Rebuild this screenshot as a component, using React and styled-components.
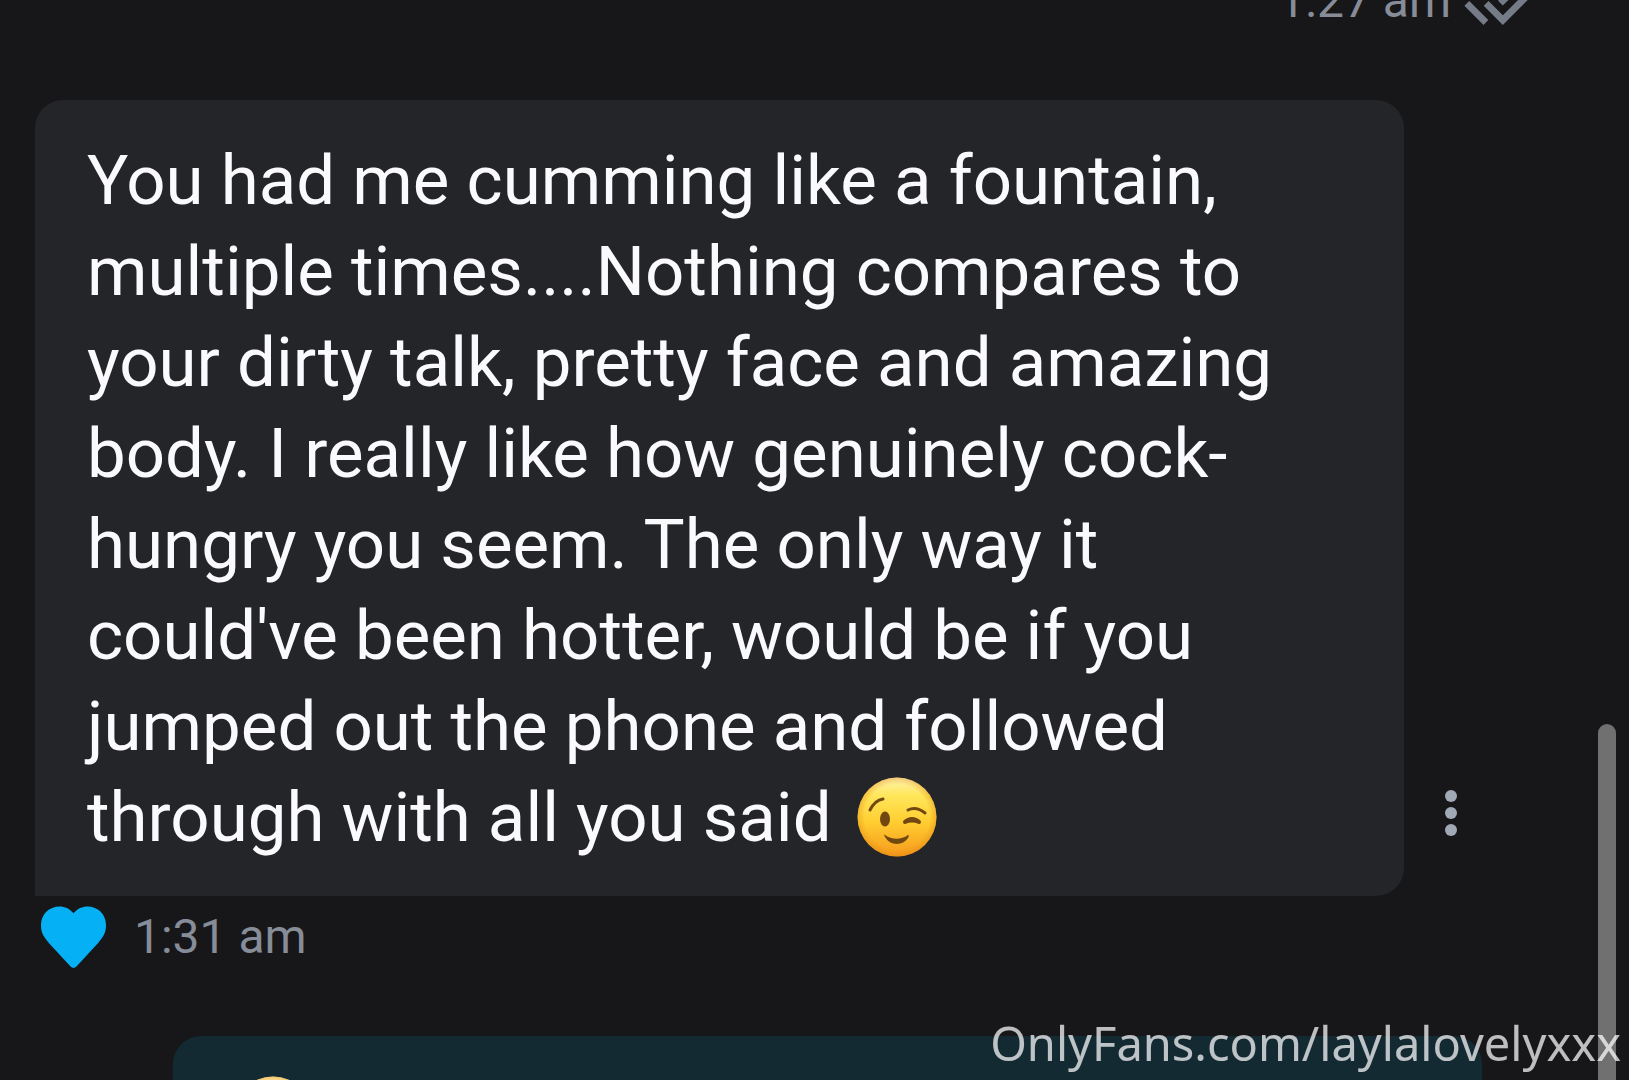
import React from 'react'
import styled, { createGlobalStyle } from 'styled-components';

const GlobalStyle = createGlobalStyle`
  * {
    box-sizing: border-box;
  }
  body {
    margin: 0;
    background-color: #171719;
    font-family: Roboto, 'Noto Sans', sans-serif;
  }
`

const Screen = styled.div`
  display: flex;
  height: 100vh;
  overflow: hidden;
  background-color: #171719;
`

const Thread = styled.main`
  display: flex;
  flex: 1;
  flex-direction: column;
  gap: 58px;
  min-width: 0;
  margin-top: -40px;
`

const Message = styled.article`
  display: flex;
  flex-direction: column;
  flex-shrink: 0;
`

const MessageRow = styled.div`
  display: flex;
  align-items: flex-end;
  padding: ${({ $own }) => ($own ? '0 116px 0 173px' : '0 123px 0 35px')};
`

const Bubble = styled.div`
  flex: 1;
  min-width: 0;
  padding: 35px 52px 33px;
  border-radius: ${({ $own }) => ($own ? '28px 28px 0 28px' : '28px 28px 28px 0')};
  background-color: ${({ $own }) => ($own ? '#132a32' : '#242529')};
`

const Text = styled.p`
  margin: 0;
  font-size: 69px;
  line-height: 91px;
  color: #fafafc;
`

const Meta = styled.footer`
  display: flex;
  align-items: center;
  justify-content: ${({ $own }) => ($own ? 'flex-end' : 'flex-start')};
  gap: ${({ $own }) => ($own ? '12px' : '28px')};
  height: 82px;
  padding: ${({ $own }) => ($own ? '0 53px 0 0' : '0 0 0 41px')};
`

const Time = styled.time`
  font-size: 48px;
  line-height: 56px;
  color: #868c98;
`

const IconButton = styled.button`
  display: flex;
  align-items: center;
  justify-content: center;
  flex-shrink: 0;
  padding: 0;
  border: 0;
  background: none;
  color: ${({ $color }) => $color};
  cursor: pointer;
`

const MoreButton = styled(IconButton)`
  width: 48px;
  height: 60px;
  margin: 0 0 53px 23px;
`

const EmojiIcon = styled.svg`
  width: 80px;
  height: 80px;
  margin: 0 8px;
  vertical-align: -16px;
`

const ScrollTrack = styled.div`
  width: 31px;
  padding: 67vh 13px 0 0;
`

const ScrollThumb = styled.div`
  height: 100%;
  border-radius: 9px 9px 0 0;
  background-color: #707070;
`

const Watermark = styled.a`
  position: fixed;
  right: 8px;
  bottom: 4px;
  font-family: 'Noto Sans', 'Open Sans', sans-serif;
  font-size: 47px;
  line-height: 66px;
  color: rgba(255, 255, 255, 0.72);
  text-decoration: none;
`

const Wink = () => (
  <EmojiIcon viewBox="0 0 80 80" role="img" aria-label="winking face">
    <defs>
      <linearGradient id="face" x1="0" y1="0" x2="0" y2="1">
        <stop offset="0" stopColor="#fff3b4" />
        <stop offset="0.22" stopColor="#ffe75c" />
        <stop offset="0.55" stopColor="#ffcf32" />
        <stop offset="1" stopColor="#f69a1c" />
      </linearGradient>
      <radialGradient id="edge">
        <stop offset="0.82" stopColor="#e88a12" stopOpacity="0" />
        <stop offset="1" stopColor="#e08414" stopOpacity="0.4" />
      </radialGradient>
    </defs>
    <circle cx="40" cy="40" r="39.5" fill="url(#face)" />
    <circle cx="40" cy="40" r="39.5" fill="url(#edge)" />
    <g fill="none" stroke="#724811" strokeLinecap="round" strokeLinejoin="round">
      <path d="M13 33C16 27 20 23 26 22" strokeWidth="3" />
      <path d="M51 33C57 30 63 32 68 36" strokeWidth="3" />
      <path d="M48 45C52 41 58 41 62 45C57 43 53 43 48 45Z" strokeWidth="4" />
    </g>
    <ellipse cx="28" cy="42" rx="5" ry="7.5" fill="#724811" />
    <path d="M28 58C35 63 44 63 51 58C52 58 52 59 51 61C46 69 33 69 28 60C27 58 27 57 28 58Z" fill="#724811" />
  </EmojiIcon>
)

const Heart = () => (
  <svg width="65" height="63" viewBox="0 0 66 63" fill="currentColor" aria-hidden="true">
    <path d="M33 7C29 2 24 0 19 0C8 0 0 8 0 19C0 27 3 31 8 37L30 61C32 63 34 63 36 61L58 37C63 31 66 27 66 19C66 8 58 0 47 0C42 0 37 2 33 7Z" />
  </svg>
)

const Dots = () => (
  <svg width="12" height="48" viewBox="0 0 12 48" fill="currentColor" aria-hidden="true">
    <circle cx="6" cy="7" r="6" />
    <circle cx="6" cy="24" r="6" />
    <circle cx="6" cy="41" r="6" />
  </svg>
)

const ReadMark = () => (
  <svg width="82" height="82" viewBox="0 0 24 24" fill="#757b87" role="img" aria-label="Read">
    <path d="M18 7l-1.41-1.41-6.34 6.34 1.41 1.41L18 7zm4.24-1.41L11.66 16.17 7.48 12l-1.41 1.41L11.66 19l12-12-1.42-1.41zM.41 13.41L6 19l1.41-1.41L1.83 12 .41 13.41z" />
  </svg>
)

const App = () => (
  <>
    <GlobalStyle />
    <Screen>
      <Thread>
        <Message>
          <Meta $own>
            <Time>1:27 am</Time>
            <ReadMark />
          </Meta>
        </Message>
        <Message>
          <MessageRow>
            <Bubble>
              <Text>
                You had me cumming like a fountain, multiple times....Nothing compares to
                your dirty talk, pretty face and amazing body. I really like how genuinely
                cock-hungry you seem. The only way it could've been hotter, would be if you
                jumped out the phone and followed through with all you said <Wink />
              </Text>
            </Bubble>
            <MoreButton type="button" $color="#a1a8b6" aria-label="More">
              <Dots />
            </MoreButton>
          </MessageRow>
          <Meta>
            <IconButton type="button" $color="#05b0f5" aria-label="Like">
              <Heart />
            </IconButton>
            <Time>1:31 am</Time>
          </Meta>
        </Message>
        <Message>
          <MessageRow $own>
            <Bubble $own>
              <Text><Wink /></Text>
            </Bubble>
          </MessageRow>
        </Message>
      </Thread>
      <ScrollTrack aria-hidden="true">
        <ScrollThumb />
      </ScrollTrack>
    </Screen>
    <Watermark href="#laylalovelyxxx">OnlyFans.com/laylalovelyxxx</Watermark>
  </>
)

export default App
